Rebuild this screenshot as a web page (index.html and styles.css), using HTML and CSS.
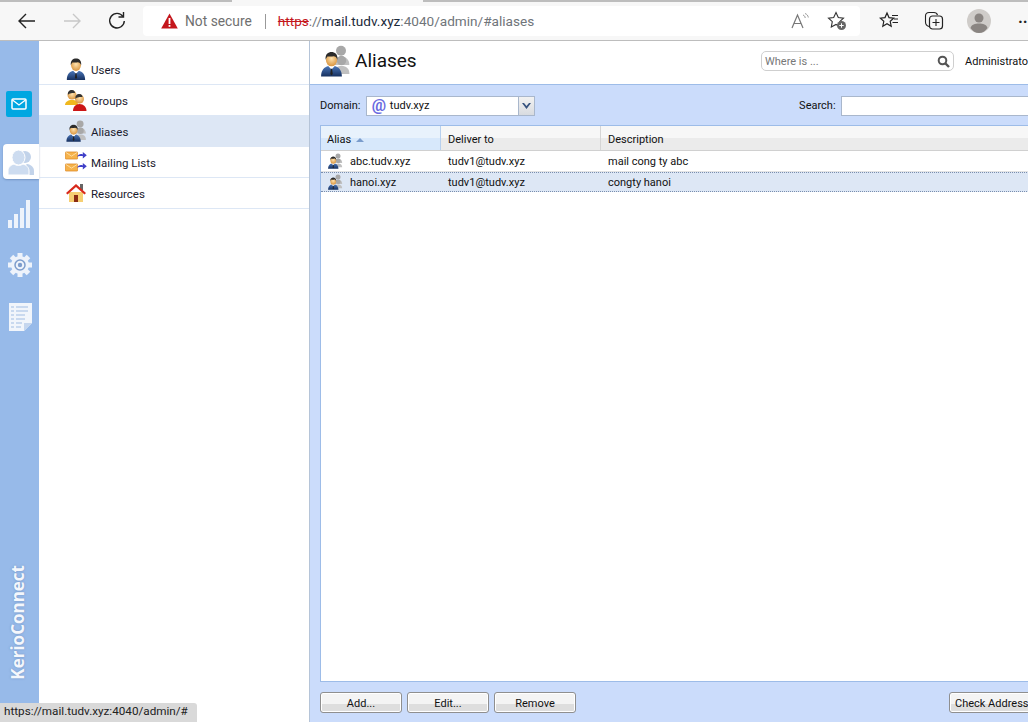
FILE: index.html
```html
<!DOCTYPE html>
<html lang="en">
  <head>
    <meta charset="UTF-8" />
    <title>Aliases</title>
    <link rel="stylesheet" href="styles.css">
  </head>
  <body>
    <svg class="defs" width="0" height="0">
      <defs>
        <radialGradient id="skin" cx="0.5" cy="0.4" r="0.6">
          <stop offset="0" stop-color="#ffe3b0" />
          <stop offset="1" stop-color="#d9953f" />
        </radialGradient>
        <linearGradient id="suit" x1="0" y1="0" x2="0" y2="1">
          <stop offset="0" stop-color="#4a76b8" />
          <stop offset="1" stop-color="#16305f" />
        </linearGradient>
        <symbol id="person" viewBox="0 0 24 24">
          <path d="M2 24c0-6 3-9 7-10l3 3 3-3c4 1 7 4 7 10z" fill="url(#suit)" />
          <path d="M9 14l3 3 3-3-1-1h-4z" fill="#fff" />
          <path d="M11.4 16.5h1.2l.6 5-1.2 1.5-1.2-1.5z" fill="#222" />
          <ellipse cx="12" cy="8" rx="5.4" ry="6.2" fill="url(#skin)" />
          <path d="M6.4 8C5.600 2.500 9 .5 12 .5s6.400 2 5.600 7.500c-.6-2.500-2-3.500-3.600-3.500-2 .6-5 .4-5.600 0C8 5 7 6 6.400 8z" fill="#2b2b2b" />
        </symbol>
        <symbol id="shadow" viewBox="0 0 24 24">
          <circle cx="12" cy="7" r="6" fill="#a8a8a8" />
          <path d="M2 24c0-7 4-10 10-10s10 3 10 10z" fill="#c0c0c0" />
        </symbol>
        <symbol id="aliases" viewBox="0 0 32 32">
          <use href="#shadow" x="12" y="0" width="20" height="20" />
          <use href="#shadow" x="13" y="10" width="19" height="19" />
          <use href="#person" x="0" y="6" width="25" height="26" />
        </symbol>
        <symbol id="envelope" viewBox="0 0 20 12">
          <rect x="0.5" y="0.500" width="19" height="11" rx="1" fill="#f6b24a" stroke="#d9801c" />
          <path d="M1 1l9 6 9-6" fill="none" stroke="#fff2d0" />
        </symbol>
        <symbol id="arrows" viewBox="0 0 12 10">
          <path d="M0 6c1-3 4-4 7-3V0l5 4-5 4V5C4 5 2 5 0 6z" fill="#3f3fc8" />
        </symbol>
      </defs>
    </svg>

    <div class="toolbar">
      <div class="tab-edge">
        <span class="edge-left"></span>
        <span class="edge-right"></span>
      </div>
      <svg class="tool-btn" width="20" height="20" viewBox="0 0 20 20">
        <path d="M18 10H2M9 3l-7 7 7 7" fill="none" stroke="#222" stroke-width="1.400" />
      </svg>
      <svg class="tool-btn" width="20" height="20" viewBox="0 0 20 20">
        <path d="M2 10h16M11 3l7 7-7 7" fill="none" stroke="#c8c8c8" stroke-width="1.400" />
      </svg>
      <svg class="tool-btn reload" width="20" height="20" viewBox="0 0 20 20">
        <path d="M16 5.500A7.300 7.300 0 1 0 17.300 10" fill="none" stroke="#222" stroke-width="1.400" />
        <path d="M16.500 1v5h-5" fill="none" stroke="#222" stroke-width="1.400" />
      </svg>
      <div class="addressbar">
        <svg width="17" height="16" viewBox="0 0 17 16">
          <path d="M8.500 0.500L16.800 15.500H.2z" fill="#c4161c" />
          <rect x="7.600" y="5" width="1.800" height="6" fill="#fff" />
          <rect x="7.600" y="12" width="1.800" height="1.800" fill="#fff" />
        </svg>
        <span class="not-secure">Not secure</span>
        <span class="addr-sep"></span>
        <span class="url"><span class="scheme">https</span>://<span class="host">mail.tudv.xyz</span>:4040/admin/#aliases</span>
        <svg class="read-icon" width="18" height="17" viewBox="0 0 18 17">
          <path d="M1 15L6.500 2 12 15M3 10.500h7" fill="none" stroke="#777" stroke-width="1.200" />
          <path d="M12 2c1.500.5 2 1.500 2.200 3M14 .5c2 .8 3 2 3.300 4" fill="none" stroke="#999" />
        </svg>
        <svg class="fav-add" width="20" height="20" viewBox="0 0 20 20">
          <path d="M9 1.500l2.300 5 5.200.6-3.800 3.600 1 5.300L9 13.400 4.300 16l1-5.300L1.500 7.100l5.200-.6z" fill="none" stroke="#333" stroke-width="1.100" />
          <circle cx="14.500" cy="14.500" r="4.500" fill="#666" />
          <path d="M12.300 14.500h4.400M14.500 12.300v4.400" stroke="#fff" />
        </svg>
      </div>
      <svg class="tool-right" width="20" height="20" viewBox="0 0 20 20">
        <path d="M8 2l2 4.600 4.700.5-3.500 3.200 1 4.900L8 12.800l-4.200 2.400 1-4.900L1.300 7.100 6 6.600z" fill="none" stroke="#222" stroke-width="1.200" />
        <path d="M13 4.500h6M15 8h4M13.500 11.500H19" stroke="#222" />
      </svg>
      <svg class="tool-right" width="20" height="20" viewBox="0 0 20 20">
        <path d="M5 15.500C3 15 1.500 13 1.500 11V5c0-2 1.500-3.500 3.500-3.500h5c1.500 0 3 1 3.500 2.500" fill="none" stroke="#222" stroke-width="1.100" />
        <rect x="5.500" y="5" width="13" height="13" rx="3" fill="none" stroke="#222" stroke-width="1.200" />
        <path d="M12 8v7M8.500 11.500h7" stroke="#222" stroke-width="1.100" />
      </svg>
      <svg class="avatar" width="24" height="24" viewBox="0 0 24 24">
        <circle cx="12" cy="12" r="12" fill="#cfccc9" />
        <circle cx="12" cy="9" r="4.500" fill="#8a8582" />
        <path d="M3.500 19c1-3.500 4.500-4.500 8.500-4.500s7.500 1 8.500 4.500c-2 3-5 5-8.500 5s-6.500-2-8.500-5z" fill="#8a8582" />
      </svg>
      <span class="more">··</span>
    </div>

    <div class="app">
      <div class="rail">
        <div class="mail-btn">
          <svg width="16" height="12" viewBox="0 0 16 12">
            <rect x="1" y="1" width="14" height="10" rx="1" fill="none" stroke="#fff" stroke-width="1.500" />
            <path d="M1.500 2L8 7l6.500-5" fill="none" stroke="#fff" stroke-width="1.300" />
          </svg>
        </div>
        <div class="users-tab">
          <svg width="28" height="28" viewBox="0 0 28 28">
            <circle cx="18" cy="9" r="6" fill="#c2d3ea" />
            <path d="M17 27c0-5 0-9 3-11 4 .5 7 3 7 7v4z" fill="#c2d3ea" />
            <ellipse cx="11.500" cy="9.500" rx="6.500" ry="7.500" fill="#cddcf0" stroke="#fff" />
            <path d="M1 27v-4c0-4 3-6 6-7 3 2 6 2 9 0 3 1 6 3 6 7v4z" fill="#cddcf0" stroke="#fff" />
          </svg>
        </div>
        <svg class="rail-icon stats" width="24" height="28" viewBox="0 0 24 28">
          <rect x="0" y="20" width="4" height="8" fill="#eef3fb" />
          <rect x="6" y="14" width="4" height="14" fill="#eef3fb" />
          <rect x="12" y="8" width="4" height="20" fill="#eef3fb" />
          <rect x="18" y="0" width="4" height="28" fill="#eef3fb" />
        </svg>
        <svg class="rail-icon gear" width="24" height="24" viewBox="0 0 24 24">
          <g fill="#eef3fb">
            <rect x="9.500" y="0" width="5" height="24" />
            <rect x="0" y="9.500" width="24" height="5" />
            <rect x="9.500" y="0" width="5" height="24" transform="rotate(45 12 12)" />
            <rect x="9.500" y="0" width="5" height="24" transform="rotate(-45 12 12)" />
            <circle cx="12" cy="12" r="9" />
          </g>
          <circle cx="12" cy="12" r="5" fill="none" stroke="#7e9dcc" stroke-width="1.500" />
          <circle cx="12" cy="12" r="2.200" fill="#7e9dcc" />
        </svg>
        <svg class="rail-icon doc" width="23" height="28" viewBox="0 0 23 28">
          <path d="M0 0h23v20l-8 8H0z" fill="#f1f5fb" />
          <path d="M15 28v-8h8z" fill="#c5d6ee" />
          <path d="M2 4h3M7 4h12M2 8h3M7 8h12M2 12h3M7 12h9M2 16h3M7 16h9M2 20h3M7 20h6M2 24h3M7 24h5" stroke="#bcd0ec" stroke-width="1.500" />
        </svg>
        <div class="brand">KerioConnect</div>
      </div>

      <div class="nav">
        <div class="nav-item">
          <svg width="22" height="24"><use href="#person" width="22" height="24" /></svg>
          <span>Users</span>
        </div>
        <div class="nav-item">
          <svg width="22" height="22" viewBox="0 0 22 22">
            <circle cx="7" cy="6" r="4.500" fill="url(#skin)" />
            <path d="M7 1c-3 0-4.500 2-4 5 1-2 5-2 7-2 0-1.500-1-3-3-3z" fill="#333" />
            <path d="M0 16c0-3 3-5 7-5s6 2 6 5z" fill="#f0b81e" />
            <circle cx="14.500" cy="10" r="4.500" fill="url(#skin)" />
            <path d="M14.500 5c-3 0-4.500 2-4 5 1-2 5-2 7-2 0-1.500-1-3-3-3z" fill="#333" />
            <path d="M8 22c0-4 2.500-7 6.500-7s7 3 7 7z" fill="#cc1616" />
          </svg>
          <span>Groups</span>
        </div>
        <div class="nav-item active">
          <svg width="22" height="22"><use href="#aliases" width="22" height="22" /></svg>
          <span>Aliases</span>
        </div>
        <div class="nav-item">
          <svg width="22" height="22" viewBox="0 0 22 22">
            <use href="#envelope" x="0" y="0" width="13" height="9" />
            <use href="#envelope" x="0" y="12" width="13" height="9" />
            <use href="#arrows" x="12" y="1" width="10" height="8" />
            <use href="#arrows" x="12" y="12" width="10" height="8" />
          </svg>
          <span>Mailing Lists</span>
        </div>
        <div class="nav-item">
          <svg width="22" height="22" viewBox="0 0 22 22">
            <rect x="15" y="2" width="3" height="6" fill="#666" />
            <path d="M4 10h14v10H4z" fill="#f6cf73" />
            <rect x="9" y="13" width="4" height="7" fill="#8a2b14" />
            <path d="M1 11L11 2l10 9-1.500 1.500L11 5l-8.500 7.500z" fill="#d8291c" />
          </svg>
          <span>Resources</span>
        </div>
      </div>

      <div class="main">
        <div class="head">
          <svg width="32" height="32"><use href="#aliases" width="32" height="32" /></svg>
          <h1>Aliases</h1>
          <div class="where">
            <span>Where is ...</span>
            <svg width="13" height="13" viewBox="0 0 13 13">
              <circle cx="5.500" cy="5.500" r="3.800" fill="none" stroke="#555" stroke-width="2" />
              <path d="M8.500 8.500l3.500 3.500" stroke="#555" stroke-width="2.400" />
            </svg>
          </div>
          <span class="user">Administrator</span>
        </div>
        <div class="panel">
          <div class="filters">
            <label class="domain-label">Domain:</label>
            <div class="combo">
              <span class="at">@</span>
              <span class="combo-text">tudv.xyz</span>
              <span class="combo-btn">
                <svg width="9" height="6" viewBox="0 0 9 6"><path d="M0 0h2l2.500 3L7 0h2L4.500 6z" fill="#35527f" /></svg>
              </span>
            </div>
            <label class="search-label">Search:</label>
            <div class="search-box"></div>
          </div>
          <div class="grid">
            <div class="grid-head">
              <div class="col col-alias sorted">Alias <i class="sort-up"></i></div>
              <div class="col col-deliver">Deliver to</div>
              <div class="col col-desc">Description</div>
            </div>
            <div class="grid-row">
              <div class="col col-alias">
                <svg width="16" height="16"><use href="#aliases" width="16" height="16" /></svg>
                abc.tudv.xyz
              </div>
              <div class="col col-deliver">tudv1@tudv.xyz</div>
              <div class="col col-desc">mail cong ty abc</div>
            </div>
            <div class="grid-row selected">
              <div class="col col-alias">
                <svg width="16" height="16"><use href="#aliases" width="16" height="16" /></svg>
                hanoi.xyz
              </div>
              <div class="col col-deliver">tudv1@tudv.xyz</div>
              <div class="col col-desc">congty hanoi</div>
            </div>
          </div>
          <div class="actions">
            <button>Add...</button>
            <button>Edit...</button>
            <button>Remove</button>
            <button class="check">Check Address...</button>
          </div>
        </div>
      </div>
    </div>

    <div class="status">https://mail.tudv.xyz:4040/admin/#</div>
  </body>
</html>
```

FILE: styles.css
```css
* {
  box-sizing: border-box;
}

html,
body {
  margin: 0;
  padding: 0;
  height: 722px;
  width: 1028px;
  overflow: hidden;
}

body {
  font-family: Roboto, "Noto Sans", sans-serif;
  font-size: 11px;
  color: #111;
  background-color: white;
}

.defs {
  display: block;
  height: 0;
}

/* browser chrome */
.toolbar {
  display: flex;
  align-items: center;
  height: 41px;
  background-color: #f7f7f7;
  border-bottom: 1px solid #bdbdbd;
  padding: 2px 0 0 17px;
  position: relative;
}

.toolbar > * {
  flex: none;
}

.tab-edge span {
  position: absolute;
  top: 0;
  height: 2px;
  background-color: #bdbdbd;
}

.edge-left {
  left: 0;
  width: 232px;
}

.edge-right {
  left: 423px;
  right: 0;
}

.tool-btn {
  margin-right: 25px;
}

.tool-btn.reload {
  margin-right: 16px;
}

.addressbar {
  display: flex;
  align-items: center;
  width: 717px;
  height: 30px;
  background-color: white;
  border-radius: 4px;
  padding-left: 18px;
}

.not-secure {
  margin-left: 7px;
  font-size: 13.800px;
  color: #6f6f6f;
}

.addr-sep {
  width: 1px;
  height: 15px;
  background-color: #999;
  margin: 0 12px 0 13px;
}

.url {
  font-size: 13.600px;
  color: #70757a;
}

.scheme {
  color: #c4161c;
  text-decoration: line-through;
}

.host {
  color: #1b2a3a;
}

.read-icon {
  margin-left: auto;
}

.fav-add {
  margin: 0 13px 0 18px;
}

.tool-right {
  margin-left: 19px;
}

.tool-right + .tool-right {
  margin-left: 25px;
}

.avatar {
  margin-left: 23px;
}

.more {
  margin-left: 27px;
  font-size: 16px;
  font-weight: bold;
  color: #222;
  white-space: nowrap;
}

/* app layout */
.app {
  display: flex;
  height: 681px;
}

.rail {
  flex: none;
  width: 39px;
  background-color: #97bae9;
  display: flex;
  flex-direction: column;
  align-items: flex-start;
  padding-top: 50px;
}

.mail-btn {
  display: flex;
  align-items: center;
  justify-content: center;
  width: 26px;
  height: 26px;
  margin-left: 6px;
  background-color: #00a7e1;
  border-radius: 2px;
}

.users-tab {
  display: flex;
  align-items: center;
  justify-content: center;
  width: 36px;
  height: 35px;
  margin: 27px 0 0 3px;
  background-color: white;
  border-radius: 4px 0 0 4px;
  box-shadow: 0 1px 2px rgba(60, 90, 140, 0.4);
}

.rail-icon {
  display: block;
}

.stats {
  margin: 21px 0 0 8px;
}

.gear {
  margin: 25px 0 0 8px;
}

.doc {
  margin: 26px 0 0 9px;
}

.brand {
  margin: auto 0 42px 9px;
  writing-mode: vertical-rl;
  transform: rotate(180deg);
  font-family: "Open Sans", sans-serif;
  font-size: 17px;
  font-weight: 700;
  line-height: 18px;
  color: #f4f7fc;
  text-shadow: 0 0 2px rgba(70, 100, 150, 0.5);
}

.nav {
  flex: none;
  width: 271px;
  border-right: 1px solid #b5c4d8;
  padding-top: 13px;
}

.nav-item {
  display: flex;
  align-items: center;
  height: 31px;
  padding-left: 26px;
  border-bottom: 1px solid #dde7f5;
  font-size: 11.500px;
  color: #1a1a2e;
}

.nav-item span {
  padding-top: 1px;
}

.nav-item svg {
  flex: none;
  margin-right: 4px;
}

.nav-item.active {
  background-color: #dde7f5;
}

.main {
  flex: none;
  width: 760px;
  display: flex;
  flex-direction: column;
}

.head {
  display: flex;
  align-items: center;
  height: 44px;
  background-color: white;
  border-bottom: 1px solid #9dbce8;
  padding: 0 0 4px 9px;
}

.head h1 {
  margin: 0 0 0 4px;
  font-size: 19px;
  font-weight: normal;
  color: #111;
}

.where {
  display: flex;
  align-items: center;
  justify-content: space-between;
  width: 193px;
  height: 20px;
  margin-left: auto;
  padding: 1px 3px 0 3px;
  border: 1px solid #cfcfcf;
  border-radius: 5px;
  color: #777;
}

.user {
  flex: none;
  width: 105px;
  margin-left: 11px;
  padding-top: 1px;
  white-space: nowrap;
}

.panel {
  flex: 1;
  background-color: #cbdcfb;
  padding: 10px 10px 0;
  display: flex;
  flex-direction: column;
}

.filters {
  display: flex;
  align-items: center;
  height: 21px;
}

.domain-label {
  width: 46px;
}

.combo {
  display: flex;
  align-items: center;
  width: 170px;
  height: 20px;
  background-color: white;
  border: 1px solid #a9b7cc;
}

.at {
  width: 23px;
  padding-left: 1px;
  font-size: 16px;
  line-height: 16px;
  font-weight: bold;
  color: #6a6ae0;
  text-align: center;
}

.combo-text {
  flex: 1;
}

.combo-btn {
  display: flex;
  align-items: center;
  justify-content: center;
  width: 16px;
  height: 18px;
  background: linear-gradient(#f2f2f2, #d8dbe0);
  border-left: 1px solid #a9b7cc;
}

.search-label {
  width: 42px;
  margin-left: 264px;
}

.search-box {
  width: 220px;
  height: 20px;
  background-color: white;
  border: 1px solid #a9b7cc;
}

.grid {
  width: 760px;
  height: 557px;
  margin-top: 9px;
  background-color: white;
  border: 1px solid #9dbce8;
}

.grid-head,
.grid-row {
  display: flex;
}

.grid-head {
  height: 25px;
  background: linear-gradient(#f7f7f7 50%, #ebebeb 50%);
  border-bottom: 1px solid #d0d0d0;
}

.grid-head .col {
  padding-top: 7px;
  border-right: 1px solid #d5d5d5;
}

.grid-head .sorted {
  background: linear-gradient(#e8f2fc 50%, #d7e8fb 50%);
  border-right-color: #b7d0ee;
}

.sort-up {
  display: inline-block;
  width: 0;
  height: 0;
  margin-left: 2px;
  vertical-align: 1px;
  border-left: 4px solid transparent;
  border-right: 4px solid transparent;
  border-bottom: 4px solid #7a9ccc;
}

.col {
  flex: none;
  padding-left: 7px;
  white-space: nowrap;
}

.col-alias {
  width: 120px;
  padding-left: 6px;
}

.col-deliver {
  width: 160px;
}

.col-desc {
  flex: 1;
}

.grid-row {
  align-items: center;
  height: 21px;
  border-bottom: 1px solid #e4e4e4;
}

.grid-row .col-alias {
  display: flex;
  align-items: center;
  gap: 7px;
}

.grid-row.selected {
  height: 20px;
  background-color: #dde7f5;
  border-top: 1px dotted #7a8eae;
  border-bottom: 1px dotted #7a8eae;
}

.actions {
  display: flex;
  gap: 5px;
  margin-top: 10px;
}

.actions button {
  width: 82px;
  height: 21px;
  padding: 1px 0 0;
  font-family: inherit;
  font-size: 11px;
  color: #111;
  background: linear-gradient(#f4f4f4 58%, #dedede 58%);
  border: 1px solid #8f8f8f;
  border-radius: 3px;
  box-shadow: inset 0 0 0 1px #fff;
}

.actions .check {
  width: 90px;
  margin-left: 368px;
  text-align: left;
  padding-left: 5px;
  white-space: nowrap;
}

.status {
  position: absolute;
  left: 0;
  bottom: 0;
  width: 197px;
  height: 19px;
  padding: 1px 0 0 4px;
  font-size: 11.700px;
  color: #222;
  background-color: #d9d9d9;
  border-top-right-radius: 3px;
  white-space: nowrap;
}
```
